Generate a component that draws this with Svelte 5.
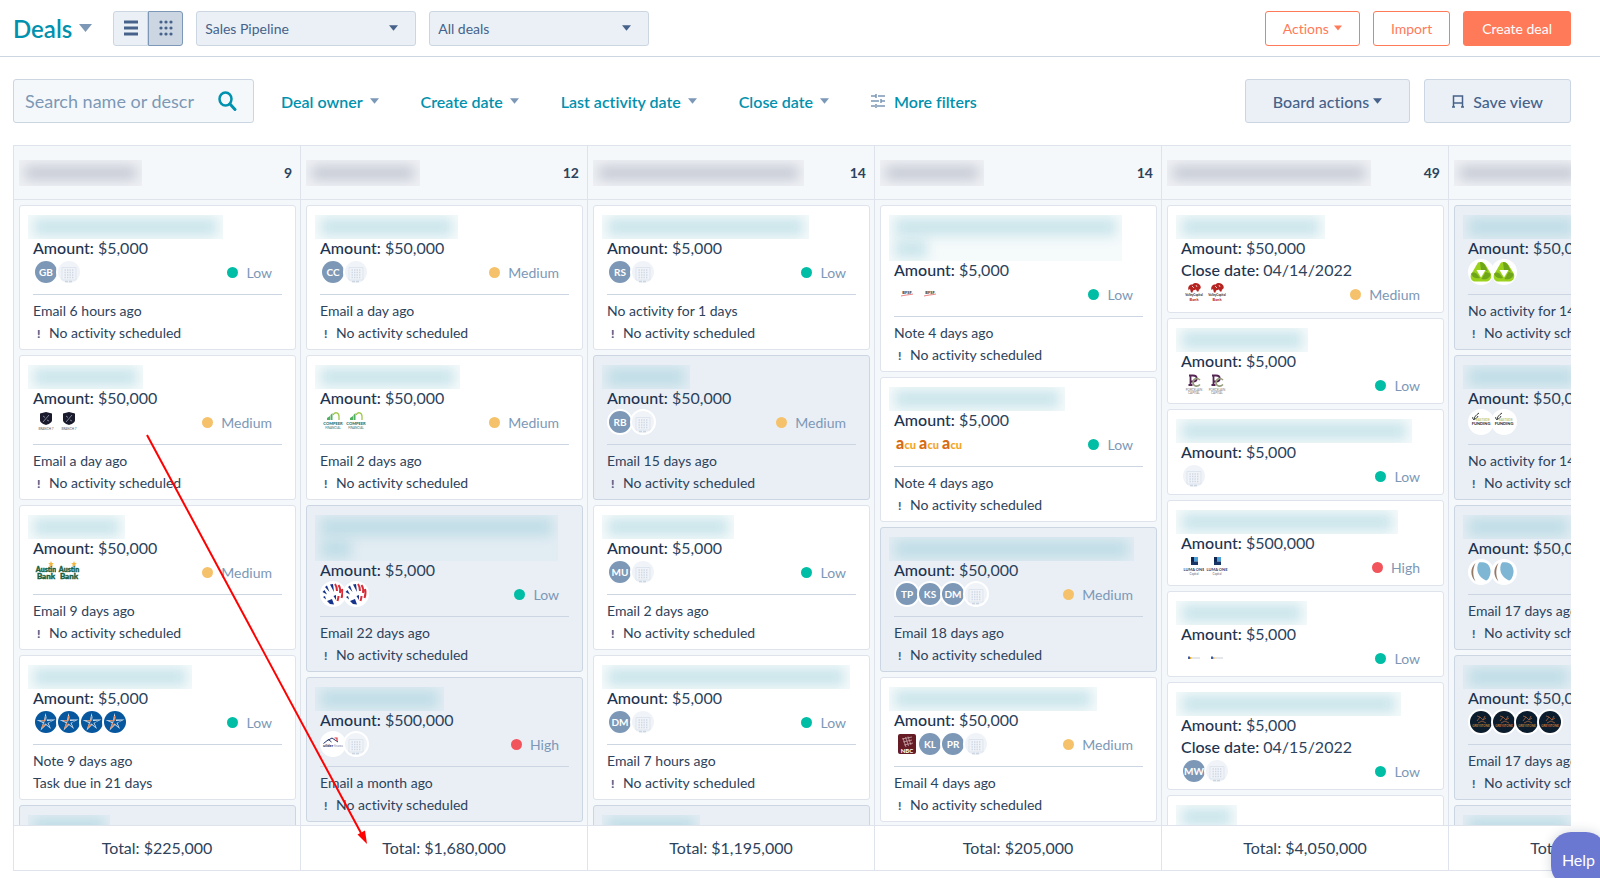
<script>
  const priorities = { low: "Low", medium: "Medium", high: "High" };
  const NONE = "No activity scheduled";

  const filters = ["Deal owner", "Create date", "Last activity date", "Close date"];

  const columns = [
    {
      title: 123,
      count: 9,
      total: "$225,000",
      deals: [
        { name: [195], amount: "$5,000", icons: ["GB", "company"], priority: "low", last: "Email 6 hours ago", next: NONE },
        { name: [115], amount: "$50,000", icons: ["shield", "shield"], priority: "medium", last: "Email a day ago", next: NONE },
        { name: [97], amount: "$50,000", icons: ["austin", "austin"], priority: "medium", last: "Email 9 days ago", next: NONE },
        { name: [164], amount: "$5,000", icons: ["star", "star", "star", "star"], priority: "low", last: "Note 9 days ago", next: "Task due in 21 days" },
        { name: [82], stale: true },
      ],
    },
    {
      title: 114,
      count: 12,
      total: "$1,680,000",
      deals: [
        { name: [143], amount: "$50,000", icons: ["CC", "company"], priority: "medium", last: "Email a day ago", next: NONE },
        { name: [145], amount: "$50,000", icons: ["arch", "arch"], priority: "medium", last: "Email 2 days ago", next: NONE },
        { name: [243, 42], amount: "$5,000", icons: ["flag", "flag"], priority: "low", last: "Email 22 days ago", next: NONE, stale: true },
        { name: [129], amount: "$500,000", icons: ["roof", "company"], priority: "high", last: "Email a month ago", next: NONE, stale: true },
      ],
    },
    {
      title: 211,
      count: 14,
      total: "$1,195,000",
      deals: [
        { name: [207], amount: "$5,000", icons: ["RS", "company"], priority: "low", last: "No activity for 1 days", next: NONE },
        { name: [88], amount: "$50,000", icons: ["RB", "company"], priority: "medium", last: "Email 15 days ago", next: NONE, stale: true },
        { name: [132], amount: "$5,000", icons: ["MU", "company"], priority: "low", last: "Email 2 days ago", next: NONE },
        { name: [248], amount: "$5,000", icons: ["DM", "company"], priority: "low", last: "Email 7 hours ago", next: NONE },
        { name: [98], stale: true },
      ],
    },
    {
      title: 104,
      count: 14,
      total: "$205,000",
      deals: [
        { name: [233, 44], amount: "$5,000", icons: ["swoosh", "swoosh"], priority: "low", last: "Note 4 days ago", next: NONE },
        { name: [176], amount: "$5,000", icons: ["acu", "acu", "acu"], priority: "low", last: "Note 4 days ago", next: NONE },
        { name: [245], amount: "$50,000", icons: ["TP", "KS", "DM", "company"], priority: "medium", last: "Email 18 days ago", next: NONE, stale: true },
        { name: [208], amount: "$50,000", icons: ["nbc", "KL", "PR", "company"], priority: "medium", last: "Email 4 days ago", next: NONE },
      ],
    },
    {
      title: 204,
      count: 49,
      total: "$4,050,000",
      deals: [
        { name: [149], amount: "$50,000", close: "04/14/2022", icons: ["bison", "bison"], priority: "medium" },
        { name: [132], amount: "$5,000", icons: ["pc", "pc"], priority: "low" },
        { name: [236], amount: "$5,000", icons: ["company"], priority: "low" },
        { name: [222], amount: "$500,000", icons: ["luma", "luma"], priority: "high" },
        { name: [131], amount: "$5,000", icons: ["dash", "dash"], priority: "low" },
        { name: [225], amount: "$5,000", close: "04/15/2022", icons: ["MW", "company"], priority: "low" },
        { name: [61] },
      ],
    },
    {
      title: 128,
      count: 9,
      total: "$1,450,000",
      deals: [
        { name: [116], amount: "$50,000", icons: ["triangle", "triangle"], priority: "medium", last: "No activity for 14 days", next: NONE, stale: true },
        { name: [116], amount: "$50,000", icons: ["funding", "funding"], priority: "medium", last: "No activity for 14 days", next: NONE, stale: true },
        { name: [110], amount: "$50,000", icons: ["crescent", "crescent"], priority: "medium", last: "Email 17 days ago", next: NONE, stale: true },
        { name: [110], amount: "$50,000", icons: ["globe", "globe", "globe", "globe"], priority: "medium", last: "Email 17 days ago", next: NONE, stale: true },
        { name: [110], stale: true },
      ],
    },
  ];

  let view = $state("board");
  let search = $state("");
</script>

{#snippet caret()}
  <svg class="caret" viewBox="0 0 10 6" aria-hidden="true"><path d="M0 0h10L5 6z" /></svg>
{/snippet}

{#snippet logo(kind)}
  <svg class="logo" viewBox="0 0 22 22" aria-hidden="true">
    {#if kind === "company"}
      <circle cx="11" cy="11" r="11" fill="#f0f3f8" />
      <path d="M4 6.500h14V19H4z" fill="none" stroke="#dfe5ee" />
      <path d="M6.500 9h10M6.500 11.500h10M6.500 14h10M6.500 16.500h10" stroke="#cfd9e5" stroke-width="1.400" stroke-dasharray="1.400 1.100" />
      <path d="M7 20.500h8" stroke="#cbd6e2" stroke-width="1.500" stroke-dasharray="3 1" />
    {:else if kind === "shield"}
      <path d="M5 2.500 11 1l6 1.500V9c0 2.500-3 4-6 5-3-1-6-2.500-6-5z" fill="#191b2d" />
      <path d="m8 11 6-7M8 5l2 1.500M12 9l2 1" stroke="#8c8fa2" stroke-width="0.900" />
      <text x="11" y="19" font-size="3" fill="#555" text-anchor="middle">BRANCH 7</text>
    {:else if kind === "arch"}
      <path d="M5 9V7l3-2v4zM8.500 9V4l2-2v7z" fill="#50b060" />
      <path d="M11 4c2-4 6-2 6 1.500V9" fill="none" stroke="#9dc84a" stroke-width="1.300" />
      <text x="11" y="14" font-size="4" font-weight="900" fill="#24706c" text-anchor="middle">COMPEER</text>
      <text x="11" y="17.500" font-size="3" fill="#24706c" text-anchor="middle">FINANCIAL</text>
    {:else if kind === "austin"}
      <path d="m16 0 .8 2 2 .2-1.500 1.300.5 2-1.800-1-1.800 1 .5-2-1.500-1.300 2-.2z" fill="#f2b63c" />
      <text x="11" y="11" font-size="7" font-weight="900" fill="#17603f" stroke="#17603f" stroke-width="0.400" text-anchor="middle">Austin</text>
      <text x="11" y="18" font-size="8" font-weight="900" fill="#17603f" stroke="#17603f" stroke-width="0.400" text-anchor="middle">Bank</text>
    {:else if kind === "star"}
      <circle cx="11" cy="11" r="11" fill="#07579f" />
      <path d="m10.500 2 1.500 6.500h8.500L13.500 12l2.500 6-5-4-5.500 5.500L8 12 1.500 9l7.500.500z" fill="#dae5ee" />
      <path d="m11.500 6 .5 4 6-.500-5.500 2.500 2 4-4-3.500L7 16l2.500-4.500L5 10l5 .5z" fill="#07579f" />
      <path d="m10.500 5-.5 5-4-.500M9 12l-2.500 5 4-3.500" fill="none" stroke="#ec7d42" stroke-width="0.900" />
    {:else if kind === "flag"}
      <circle cx="11" cy="11" r="11" fill="#fff" />
      <path d="m3 4 2-1.500L7.500 9zM8 1.500l3-.5 1 8zM.5 9l2-2L5 11.500zM1 14l2-1 1 3.500zM5 18l5-2 2 5.500-4-.500z" fill="#16338b" />
      <path d="M13 1c1.500 2 2 4 2 7M16.500 2c1.500 2 2 5 1.500 8M20 6c1 3 .5 6-.500 9M16.500 13c0 2-.500 3-1 5" fill="none" stroke="#d82c38" stroke-width="2" />
      <path d="m11.500 13 2.500-1v5z" fill="#16338b" />
    {:else if kind === "roof"}
      <circle cx="11" cy="11" r="11" fill="#fff" />
      <path d="m1.500 10.500 5-4 3 2.500M5.500 7.500 10 5l6 4" fill="none" stroke="#25356f" />
      <path d="M12.500 5h2.500v3" fill="none" stroke="#dc353d" stroke-width="1.200" />
      <text x="1" y="13.500" font-size="4" font-weight="900" fill="#25356f">uilder</text>
      <text x="12" y="13.500" font-size="3" fill="#7080a8">finance</text>
    {:else if kind === "acu"}
      <text x="0" y="15.500" font-size="16" font-weight="900" fill="#d76b12">a</text>
      <text x="8.500" y="15.500" font-size="11" font-weight="900" fill="#f4a41f">cu</text>
    {:else if kind === "swoosh"}
      <text x="11" y="11" font-size="4" font-weight="900" fill="#333" text-anchor="middle">BFSF</text>
      <path d="M5 13c4-1 7-1 12-2" fill="none" stroke="#e04a4a" stroke-width="0.700" />
    {:else if kind === "nbc"}
      <rect x="2" y="1" width="18" height="20" rx="2" fill="#651c25" />
      <path d="m7 5 3 9M9.500 4l3 9M12 3.500l3 8.500M6 6l10-2M7 9l9-2M8 12l9-2" stroke="#c9a5a9" stroke-width="0.800" />
      <text x="11" y="20" font-size="6" font-weight="900" fill="#fff" text-anchor="middle">NBC</text>
    {:else if kind === "bison"}
      <path d="M5.500 7c-1-3 1-6 4-5.500C12-1 16 0 17.500 3c.8 2-.5 3.500-1.500 3.500l-.5 2H14l-1-2-3 1-.5 2H8L7 6z" fill="#b62421" />
      <path d="m9 3 2 2M13 2l1 2" stroke="#fff" stroke-width="0.700" />
      <text x="11" y="13" font-size="3" font-weight="900" fill="#3c3234" text-anchor="middle">ValleyCapital</text>
      <text x="11" y="18" font-size="4" font-weight="900" fill="#bc2929" text-anchor="middle">Bank</text>
    {:else if kind === "pc"}
      <path d="M6 1.500h4c5 0 5 6 0 6H8M7.500 1.500V11M5.500 11h4" fill="none" stroke="#542452" stroke-width="1.800" />
      <path d="M17 6c-3-3-7-1-7 2.500s4 5 7 2" fill="none" stroke="#949c7c" stroke-width="1.600" />
      <text x="11" y="16.500" font-size="3" fill="#777" text-anchor="middle">PORCELAIN</text>
      <text x="11" y="19.500" font-size="3" fill="#777" text-anchor="middle">CAPITAL</text>
    {:else if kind === "luma"}
      <path d="M8 1h3v5H8z" fill="#11244d" />
      <path d="M11 1h4v4.500h-4z" fill="#4ba0d8" />
      <path d="M8 5.500h7V9H8z" fill="#183568" />
      <text x="11" y="14.500" font-size="4" font-weight="700" fill="#37415f" text-anchor="middle">LUMA ONE</text>
      <text x="11" y="18.500" font-size="3" fill="#667" text-anchor="middle">Capital</text>
    {:else if kind === "dash"}
      <path d="M5 9.500h2v2.500H5z" fill="#405ea9" />
      <path d="M7 10h1.500v2H7z" fill="#efb22b" />
      <path d="M9 11h8" stroke="#c8cfd8" stroke-width="1" />
    {:else if kind === "triangle"}
      <circle cx="11" cy="11" r="11" fill="#fff" />
      <path d="M8 1.500c3-1.500 6 0 7.500 2.500l5 8c2 4 0 8-4 8.500h-12C1 20 0 16 1 13.500z" fill="#9ad11d" />
      <path d="M10 1c3 0 5 2 6 5l2 5-3-2H11zM1 13c1-2 4-2 6 0l3 4c-4 1-7 0-9-4zM20.500 13c0 4-4 6-9 5l4-7c2 0 4 1 5 2z" fill="#6fa51b" />
      <path d="M6.500 9h9L11 16.500z" fill="#fff" />
    {:else if kind === "funding"}
      <circle cx="11" cy="11" r="11" fill="#fff" />
      <path d="M4 9c0-3 2-5 5-7M4 8c2 0 3-1 4-3M4 9C3 8 2 7 3 6" fill="none" stroke="#343b37" />
      <text x="6" y="9.500" font-size="3" fill="#9aab28">EASTSIDE</text>
      <text x="11" y="14" font-size="4" font-weight="900" fill="#343434" text-anchor="middle">FUNDING</text>
    {:else if kind === "crescent"}
      <circle cx="11" cy="11" r="11" fill="#fff" />
      <path d="M9 1.500c9-2 12 5 11.500 10-.5 4-2.500 8-4.500 8-8-3-11-12-7-18z" fill="#7fb6d3" />
      <path d="M5.500 2C0 7 0 15 5.500 20.500 2.500 15 2.500 8 5.500 2z" fill="#957965" />
    {:else if kind === "globe"}
      <circle cx="11" cy="11" r="11" fill="#0b1c2d" />
      <path d="m7 10 3-4 3 3 2-4M10 6 7 5M8 12l4-2 4 2M13 9l3-2" fill="none" stroke="#a7653c" stroke-width="0.800" />
      <text x="11" y="16" font-size="3" font-weight="700" fill="#c37d38" text-anchor="middle">GREYSTONE</text>
    {/if}
  </svg>
{/snippet}

<div class="page">
  <header class="topbar">
    <button class="object-switch">Deals {@render caret()}</button>
    <div class="views">
      <button class:active={view === "list"} aria-label="List view" onclick={() => (view = "list")}>
        <svg width="14" height="16" viewBox="0 0 14 16"><path d="M0 2h14M0 8h14M0 14h14" stroke="currentColor" stroke-width="3" /></svg>
      </button>
      <button class:active={view === "board"} aria-label="Board view" onclick={() => (view = "board")}>
        <svg width="14" height="16" viewBox="0 0 14 16" fill="currentColor">
          {#each [2, 8, 14] as cy}
            {#each [2, 7, 12] as cx}
              <circle {cx} {cy} r="1.600" />
            {/each}
          {/each}
        </svg>
      </button>
    </div>
    <label class="picker">
      <select aria-label="Pipeline"><option>Sales Pipeline</option></select>
      {@render caret()}
    </label>
    <label class="picker">
      <select aria-label="Deals view"><option>All deals</option></select>
      {@render caret()}
    </label>
    <div class="actions">
      <button>Actions {@render caret()}</button>
      <button>Import</button>
      <button class="primary">Create deal</button>
    </div>
  </header>

  <main>
    <div class="toolbar">
      <label class="search">
        <input type="text" aria-label="Search deals" placeholder="Search name or descr" bind:value={search} />
        <svg width="19" height="20" viewBox="0 0 19 20" fill="none" stroke="#0091ae">
          <ellipse cx="7.500" cy="8" rx="6" ry="6.500" stroke-width="2.500" />
          <path d="m12 13 5 5.500" stroke-width="3" stroke-linecap="round" />
        </svg>
      </label>
      <div class="filters">
        {#each filters as filter}
          <button>{filter} {@render caret()}</button>
        {/each}
        <button class="more">
          <svg width="14" height="14" viewBox="0 0 14 14" fill="none" stroke="#7c98b6" stroke-width="1.500">
            <path d="M0 2h5M7 2h7M0 7h8M10 7h4M0 12h4M6 12h8M5 0v4M10 5v4M5 10v4" />
          </svg>
          More filters
        </button>
      </div>
      <div class="board-buttons">
        <button class="secondary">Board actions {@render caret()}</button>
        <button class="secondary save">
          <svg width="12" height="13" viewBox="0 0 12 13" fill="none" stroke="currentColor" stroke-width="1.500">
            <path d="M1.500 12V1h9v11M1.500 8h9M0 12h3M9 12h3" />
          </svg>
          Save view
        </button>
      </div>
    </div>

    <div class="board">
      {#each columns as column}
        <section class="column">
          <div class="column-head">
            <div class="redacted grey" style:width="{column.title}px"><i></i></div>
            <span>{column.count}</span>
          </div>
          <div class="cards">
            {#each column.deals as deal}
              <article class="card" class:stale={deal.stale}>
                <div class="redacted" style:width="{deal.name[0]}px">
                  {#each deal.name as width}
                    <i style:width="{width - 12}px"></i>
                  {/each}
                </div>
                {#if deal.amount}
                  <div class="field"><b>Amount:</b> {deal.amount}</div>
                {/if}
                {#if deal.close}
                  <div class="field"><b>Close date:</b> {deal.close}</div>
                {/if}
                {#if deal.priority}
                  <div class="meta">
                    <div class="avatars">
                      {#each deal.icons as icon}
                        <span class="avatar">
                          {#if icon === icon.toUpperCase()}
                            <span class="initials">{icon}</span>
                          {:else}
                            {@render logo(icon)}
                          {/if}
                        </span>
                      {/each}
                    </div>
                    <span class="priority {deal.priority}">{priorities[deal.priority]}</span>
                  </div>
                {/if}
                {#if deal.last}
                  <div class="activity">
                    <div>{deal.last}</div>
                    <div>
                      {#if deal.next === NONE}<span class="alert">!</span>{/if}{deal.next}
                    </div>
                  </div>
                {/if}
              </article>
            {/each}
          </div>
          <div class="total">Total: {column.total}</div>
        </section>
      {/each}
    </div>
  </main>

  <svg class="arrow" width="230" height="420" viewBox="0 0 230 420" aria-hidden="true">
    <path d="M4 4 218 402" stroke="#f00" stroke-width="2" />
    <path d="m224 413-9.500-9.500 7.500-4z" fill="#f00" />
  </svg>
  <button class="help">Help</button>
</div>

<style>
  :global(body) {
    background: #fff;
  }
  .page {
    position: relative;
    display: flex;
    flex-direction: column;
    height: 100vh;
    overflow: hidden;
    color: #2d435c;
    font-family: Lato, "Liberation Sans", sans-serif;
    font-size: 14px;
    font-variant-ligatures: none;
  }
  .page * {
    box-sizing: border-box;
  }
  button,
  input,
  select {
    font: inherit;
    font-variant-ligatures: none;
    color: inherit;
    margin: 0;
  }
  button {
    display: flex;
    align-items: center;
    justify-content: center;
    padding: 0;
    border: 0;
    background: none;
    white-space: nowrap;
    cursor: pointer;
  }
  .caret {
    width: 9px;
    height: 6px;
    fill: currentColor;
    flex: none;
  }
  .topbar {
    display: flex;
    align-items: center;
    height: 57px;
    padding: 0 29px 0 13px;
    border-bottom: 1px solid #cbd6e2;
    flex: none;
  }
  .object-switch {
    gap: 7px;
    margin-right: 21px;
    font-size: 24px;
    font-weight: 600;
    color: #0091ae;
  }
  .object-switch .caret {
    width: 13px;
    height: 8px;
    fill: #7c98b6;
  }
  .views {
    display: flex;
    margin-right: 13px;
  }
  .views button {
    width: 35px;
    height: 35px;
    border: 1px solid #cbd6e2;
    border-radius: 3px 0 0 3px;
    background: #eaf0f6;
    color: #46628a;
  }
  .views button + button {
    border-radius: 0 3px 3px 0;
  }
  .views .active {
    background: #cbd6e2;
    border-color: #7c98b6;
  }
  .picker {
    display: grid;
    align-items: center;
    width: 220px;
    margin-right: 13px;
    color: #46628a;
  }
  .picker select {
    grid-area: 1 / 1;
    height: 35px;
    padding: 0 8px;
    border: 1px solid #cbd6e2;
    border-radius: 3px;
    background: #eaf0f6;
    appearance: none;
  }
  .picker .caret {
    grid-area: 1 / 1;
    justify-self: end;
    margin-right: 18px;
    pointer-events: none;
  }
  .actions {
    display: flex;
    gap: 13px;
    margin-left: auto;
  }
  .actions button {
    height: 35px;
    padding: 0 17px;
    gap: 5px;
    border: 1px solid #ff7a59;
    border-radius: 3px;
    color: #ff7a59;
  }
  .actions .primary {
    padding: 0 18px;
    background: #ff7a59;
    color: #fff;
  }
  .actions .caret {
    width: 8px;
  }
  main {
    display: flex;
    flex-direction: column;
    flex: 1;
    min-height: 0;
    padding: 22px 29px 7px 13px;
  }
  .toolbar {
    display: flex;
    align-items: center;
    margin-bottom: 22px;
    font-size: 16px;
  }
  .search {
    display: flex;
    align-items: center;
    width: 241px;
    height: 44px;
    padding: 0 16px 0 11px;
    border: 1px solid #cbd6e2;
    border-radius: 3px;
    background: #f5f8fa;
  }
  .search input {
    flex: 1;
    min-width: 0;
    padding: 0;
    border: 0;
    outline: 0;
    background: none;
    font-size: 18px;
  }
  .search input::placeholder {
    color: #7c98b6;
  }
  .filters {
    display: flex;
    gap: 42px;
    margin-left: 27px;
  }
  .filters button {
    gap: 7px;
    font-weight: 600;
    color: #0091ae;
  }
  .filters .caret {
    fill: #7c98b6;
  }
  .filters .more {
    gap: 9px;
  }
  .board-buttons {
    display: flex;
    gap: 14px;
    margin-left: auto;
  }
  .secondary {
    height: 44px;
    padding: 0 27px;
    gap: 4px;
    border: 1px solid #cbd6e2;
    border-radius: 3px;
    background: #eaf0f6;
    color: #46628a;
    font-weight: 500;
  }
  .save {
    gap: 9px;
  }
  .board {
    display: flex;
    flex: 1;
    min-height: 0;
    overflow: hidden;
    border: 1px solid #dfe3eb;
    border-right: 0;
  }
  .column {
    display: flex;
    flex-direction: column;
    flex: 0 0 287px;
    border-right: 1px solid #dfe3eb;
    background: #f5f8fa;
  }
  .column-head {
    display: flex;
    align-items: center;
    justify-content: space-between;
    height: 54px;
    padding: 0 8px 0 5px;
    border-bottom: 1px solid #dfe3eb;
    font-weight: 700;
    flex: none;
  }
  .cards {
    display: flex;
    flex-direction: column;
    gap: 5px;
    flex: 1;
    min-height: 0;
    padding: 5px 4px 0 5px;
    overflow: hidden;
  }
  .card {
    flex: none;
    min-height: 86px;
    padding: 9px 13px 5px;
    border: 1px solid #dfe3eb;
    border-radius: 3px;
    background: #fff;
  }
  .stale {
    background: #eaeff6;
    border-color: #cbd6e2;
  }
  .redacted {
    margin: 0 0 -2px -5px;
    padding: 1px 6px;
    overflow: hidden;
    background: #a9d7e11f;
  }
  .redacted i {
    display: block;
    height: 18px;
    margin: 2px 0;
    background: #93cbd76b;
    filter: blur(6px);
  }
  .redacted i + i {
    margin-top: 4px;
  }
  .grey {
    margin: 0;
    background: #b0b5c41a;
  }
  .grey i {
    height: 14px;
    margin: 5px 0;
    background: #a2a8b880;
  }
  .field {
    font-size: 16px;
    line-height: 22px;
    white-space: nowrap;
  }
  .field b {
    font-weight: 500;
    color: #1d3350;
  }
  .meta {
    display: flex;
    align-items: center;
    justify-content: space-between;
    height: 26px;
    padding-right: 10px;
  }
  .avatars {
    display: flex;
  }
  .avatar {
    width: 26px;
    height: 26px;
    margin-right: -3px;
    border: 2px solid #fff;
    border-radius: 50%;
    background: #fff;
  }
  .initials {
    display: block;
    border-radius: 50%;
    background: #7c98b6;
    color: #fff;
    font-size: 10px;
    font-weight: 700;
    line-height: 22px;
    text-align: center;
  }
  .logo {
    display: block;
    width: 22px;
    height: 22px;
    overflow: visible;
  }
  .priority {
    display: flex;
    align-items: center;
    gap: 8px;
    color: #7c98b6;
  }
  .priority::before {
    content: "";
    width: 11px;
    height: 11px;
    border-radius: 50%;
    background: #00bda5;
  }
  .medium::before {
    background: #f5c26b;
  }
  .high::before {
    background: #f2545b;
  }
  .activity {
    margin-top: 9px;
    padding-top: 5px;
    border-top: 1px solid #cbd6e2;
    line-height: 22px;
    white-space: nowrap;
  }
  .alert {
    display: inline-block;
    width: 16px;
    padding-left: 4px;
    font-size: 12px;
    font-weight: 900;
    line-height: 12px;
    color: #46628a;
  }
  .total {
    flex: none;
    height: 45px;
    border-top: 1px solid #dfe3eb;
    background: #fff;
    font-size: 16px;
    line-height: 44px;
    text-align: center;
  }
  .arrow {
    position: absolute;
    left: 143px;
    top: 431px;
    pointer-events: none;
  }
  .help {
    position: absolute;
    right: -6px;
    bottom: -8px;
    width: 55px;
    height: 54px;
    border-radius: 20px;
    background: #6a78d1;
    box-shadow: 0 0 12px #2d3e5033;
    color: #fff;
    font-size: 16px;
  }
</style>
